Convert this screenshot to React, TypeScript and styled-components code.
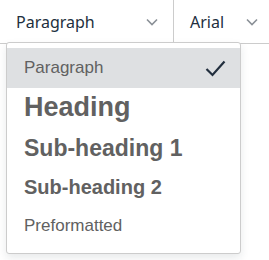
import React from 'react';
import styled, { createGlobalStyle } from 'styled-components';

const GlobalStyle = createGlobalStyle`
  html, body {
    margin: 0;
    padding: 0;
    background: #ffffff;
  }
`;

interface BlockFormat {
  label: string;
  size: number;
  bold: boolean;
  height: number;
}

const formats: Array<BlockFormat> = [
  { label: 'Paragraph', size: 17, bold: false, height: 40 },
  { label: 'Heading', size: 27, bold: true, height: 39 },
  { label: 'Sub-heading 1', size: 23, bold: true, height: 42 },
  { label: 'Sub-heading 2', size: 20, bold: true, height: 36 },
  { label: 'Preformatted', size: 17, bold: false, height: 42 }
];

function Chevron() {
  return (
    <svg width="12" height="8" viewBox="0 0 12 8">
      <path d="M1 1.5l5 5 5-5" fill="none" stroke="#8a9097" strokeWidth="1.6" />
    </svg>
  );
}

function Check() {
  return (
    <svg width="21" height="17" viewBox="0 0 21 17">
      <path d="M1.5 9l6 6L19.5 1.5" fill="none" stroke="#222f3e" strokeWidth="2.2" />
    </svg>
  );
}

export default function App() {
  const selected = 'Paragraph';
  return (
    <Page>
      <GlobalStyle />
      <Toolbar>
        <SelectButton width={173}>
          <SelectLabel>Paragraph</SelectLabel>
          <Chevron />
        </SelectButton>
        <SelectButton width={100} divided>
          <SelectLabel>Arial</SelectLabel>
          <Chevron />
        </SelectButton>
      </Toolbar>
      <Menu>
        {formats.map((format) => (
          <MenuItem
            key={format.label}
            active={format.label === selected}
            rowHeight={format.height}
          >
            <ItemText size={format.size} bold={format.bold}>
              {format.label}
            </ItemText>
            {format.label === selected && <Check />}
          </MenuItem>
        ))}
      </Menu>
    </Page>
  );
}

const Page = styled.div`
  position: relative;
  width: 269px;
  height: 260px;
  overflow: hidden;
  background: #ffffff;
`;

const Toolbar = styled.div`
  display: flex;
  height: 43px;
  border-bottom: 1px solid #cccccc;
`;

const SelectButton = styled.div<{ width: number; divided?: boolean }>`
  display: flex;
  flex-shrink: 0;
  align-items: center;
  justify-content: space-between;
  box-sizing: border-box;
  width: ${(p) => p.width}px;
  padding: 0 15px 0 16px;
  border-left: ${(p) => (p.divided ? '1px solid #cccccc' : 'none')};
`;

const SelectLabel = styled.span`
  font-family: 'Noto Sans', 'Open Sans', sans-serif;
  font-size: 16px;
  color: #222f3e;
`;

const Menu = styled.div`
  position: absolute;
  left: 6px;
  top: 42px;
  width: 235px;
  box-sizing: border-box;
  padding: 5px 0 6px;
  background: #ffffff;
  border: 1px solid #cccccc;
  border-radius: 3px;
  box-shadow: 0 4px 8px rgba(34, 47, 62, 0.1);
`;

const MenuItem = styled.div<{ active: boolean; rowHeight: number }>`
  display: flex;
  align-items: center;
  justify-content: space-between;
  height: ${(p) => p.rowHeight}px;
  padding: 0 14px 0 17px;
  background: ${(p) => (p.active ? '#dee0e2' : 'transparent')};
`;

const ItemText = styled.span<{ size: number; bold: boolean }>`
  font-family: 'Liberation Sans', Arial, sans-serif;
  font-size: ${(p) => p.size}px;
  font-weight: ${(p) => (p.bold ? 700 : 400)};
  color: #616161;
  white-space: nowrap;
`;
